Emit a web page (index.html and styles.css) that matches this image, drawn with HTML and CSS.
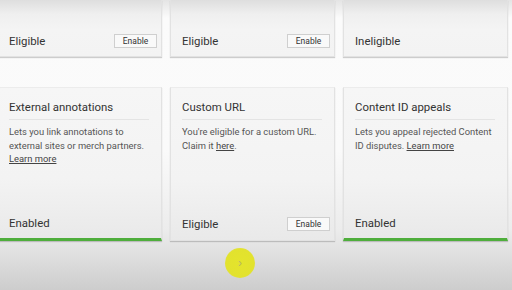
FILE: index.html
```html
<!DOCTYPE html>
<html lang="en">
<head>
    <meta charset="UTF-8">
    <meta name="viewport" content="width=device-width, initial-scale=1.0">
    <title>Features</title>
    <link rel="stylesheet" href="styles.css">
</head>
<body>
    <div class="features">
        <!-- Row 1 (scrolled, only footers visible) -->
        <section class="card short">
            <div class="card-footer">
                <span class="status">Eligible</span>
                <button class="enable">Enable</button>
            </div>
        </section>
        <section class="card short">
            <div class="card-footer">
                <span class="status">Eligible</span>
                <button class="enable">Enable</button>
            </div>
        </section>
        <section class="card short">
            <div class="card-footer">
                <span class="status">Ineligible</span>
            </div>
        </section>

        <!-- Row 2 -->
        <section class="card enabled">
            <h2>External annotations</h2>
            <p>Lets you link annotations to external sites or merch partners. <a href="#">Learn more</a></p>
            <div class="card-footer">
                <span class="status">Enabled</span>
            </div>
        </section>
        <section class="card">
            <h2>Custom URL</h2>
            <p>You're eligible for a custom URL. Claim it <a href="#">here</a>.</p>
            <div class="card-footer">
                <span class="status">Eligible</span>
                <button class="enable">Enable</button>
            </div>
        </section>
        <section class="card enabled">
            <h2>Content ID appeals</h2>
            <p>Lets you appeal rejected Content ID disputes. <a href="#">Learn more</a></p>
            <div class="card-footer">
                <span class="status">Enabled</span>
            </div>
        </section>
    </div>

    <div class="pager">
        <button class="next">›</button>
    </div>
</body>
</html>
```

FILE: styles.css
```css
* {
    margin: 0;
    padding: 0;
    box-sizing: border-box;
}

body {
    width: 512px;
    height: 290px;
    overflow: hidden;
    font-family: Roboto, "Noto Sans", sans-serif;
    color: #333;
    background: linear-gradient(to bottom, #e4e4e4 0px, #fbfbfb 18px, #fafafa 150px, #ececec 230px, #cdcdcd 290px);
}

.features {
    display: grid;
    grid-template-columns: repeat(3, 165px);
    grid-template-rows: 57px 154px;
    column-gap: 8px;
    row-gap: 30px;
    margin-left: -3px;
}

.card {
    display: flex;
    flex-direction: column;
    padding: 0 12px 0 11px;
    background: linear-gradient(to bottom, #f6f6f6 0%, #f3f3f3 60%, #e9e9e9 100%);
    border: 1px solid #e2e2e2;
    border-top-color: #ececec;
    box-shadow: 0 1px 1px rgba(0, 0, 0, 0.18);

    h2 {
        font-size: 11.4px;
        font-weight: 400;
        color: #333;
        padding: 12px 0 5px;
        border-bottom: 1px solid #e4e4e4;
    }

    p {
        font-size: 9.4px;
        line-height: 13.5px;
        color: #555;
        margin-top: 5px;
    }

    a {
        color: #444;
    }

    &.short {
        border-top: none;
        background: linear-gradient(to bottom, #dedede 0px, #efefef 14px, #f4f4f4 30px, #f3f3f3 100%);
    }

    &.enabled {
        border-bottom: 3px solid #4fae3c;
    }
}

.card-footer {
    margin-top: auto;
    display: flex;
    justify-content: space-between;
    align-items: center;
    height: 30px;
    padding-bottom: 2px;

    .status {
        font-size: 11.4px;
        color: #333;
    }

    .enable {
        width: 43px;
        height: 14px;
        font-family: inherit;
        font-size: 8.5px;
        color: #333;
        background: #f9f9f9;
        border: 1px solid #cfcfcf;
        margin-right: -8px;
        cursor: pointer;
    }
}

.short .card-footer {
    height: 32px;
    padding-bottom: 0;
    padding-top: 2px;
}

.enabled .card-footer {
    height: 28px;
}

.pager {
    display: flex;
    justify-content: center;
    padding: 7px 0 0 0;
    margin-left: -32px;

    .next {
        width: 30px;
        height: 30px;
        border: none;
        border-radius: 50%;
        background: radial-gradient(circle, #e4e42c 0%, #e2e22e 65%, rgba(226, 226, 60, 0.6) 100%);
        color: #b8b860;
        font-size: 12px;
        line-height: 30px;
        cursor: pointer;
    }
}
```
